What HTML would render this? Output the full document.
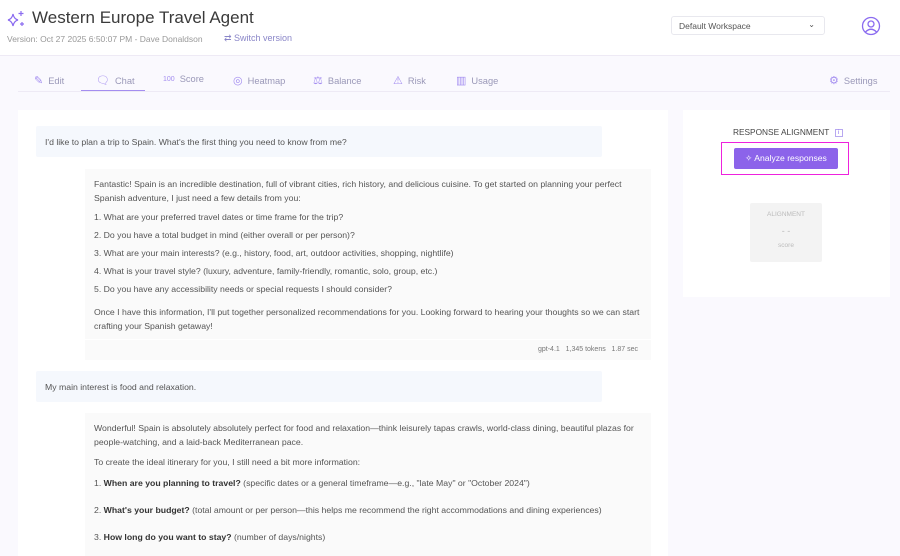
<!DOCTYPE html>
<html><head><meta charset="utf-8"><style>
*{margin:0;padding:0;box-sizing:border-box}
body{width:900px;height:556px;overflow:hidden;background:#faf9fe;font-family:"Liberation Sans",sans-serif;position:relative;color:#555}
.a{position:absolute;white-space:nowrap}
.hdr{position:absolute;left:0;top:0;width:900px;height:56px;background:#fff;border-bottom:1px solid #eeeaf5}
.tab{position:absolute;top:74px;font-size:9.3px;color:#9a98b8;display:flex;align-items:center;gap:5px}
.tab span{color:#a48ef0;font-size:11px}
.t{font-size:8.7px;color:#555;position:absolute;white-space:nowrap}
b{color:#333}
</style></head><body>
<div class="hdr"></div>
<svg class="a" style="left:5px;top:10px" width="22" height="18" viewBox="0 0 22 18" fill="none" stroke="#8b6cf0" stroke-width="1.2"><path d="M8 4 Q9 9 13 10 Q9 11 8 16 Q7 11 3 10 Q7 9 8 4Z"/><path d="M16 1v5M13.5 3.5h5M17 12v4M15 14h4"/></svg>
<div class="a" style="left:32px;top:8px;font-size:17px;color:#3a3a3a">Western Europe Travel Agent</div>
<div class="a" style="left:7px;top:34px;font-size:8.5px;color:#999">Version: Oct 27 2025 6:50:07 PM - Dave Donaldson</div>
<div class="a" style="left:224px;top:33px;font-size:9px;color:#8a86c8">⇄ Switch version</div>
<div class="a" style="left:671px;top:16px;width:154px;height:19px;border:1px solid #e8e8ee;border-radius:3px;background:#fff;font-size:8.5px;color:#555;padding:4px 7px">Default Workspace<span style="position:absolute;right:9px;top:3px;font-size:8px">⌄</span></div>
<svg class="a" style="left:861px;top:16px" width="20" height="20" viewBox="0 0 20 20" fill="none" stroke="#8b6cf0" stroke-width="1.3"><circle cx="10" cy="10" r="8.5"/><circle cx="10" cy="8" r="3"/><path d="M4.5 16 Q10 10.5 15.5 16"/></svg>

<div class="tab" style="left:34px"><span>✎</span>Edit</div>
<div class="tab" style="left:96px"><span>🗨</span>Chat</div>
<div class="a" style="left:81px;top:90px;width:64px;height:2px;background:#a48ef0"></div>
<div class="tab" style="left:163px"><span style="font-size:7px">100</span>Score</div>
<div class="tab" style="left:233px"><span>◎</span>Heatmap</div>
<div class="tab" style="left:313px"><span>⚖</span>Balance</div>
<div class="tab" style="left:393px"><span>⚠</span>Risk</div>
<div class="tab" style="left:456px"><span>▥</span>Usage</div>
<div class="tab" style="left:829px"><span>⚙</span>Settings</div>
<div class="a" style="left:18px;top:91px;width:872px;height:1px;background:#eeeaf5"></div>

<div class="a" style="left:18px;top:110px;width:650px;height:446px;background:#fff"></div>
<div class="a" style="left:36px;top:126px;width:566px;height:31px;background:#f5f8fd;border-radius:2px"></div>
<div class="t" style="left:45px;top:137px">I'd like to plan a trip to Spain. What's the first thing you need to know from me?</div>
<div class="a" style="left:85px;top:169px;width:566px;height:191px;background:#fafafa"></div>
<div class="t" style="left:94px;top:179px">Fantastic! Spain is an incredible destination, full of vibrant cities, rich history, and delicious cuisine. To get started on planning your perfect</div>
<div class="t" style="left:94px;top:193px">Spanish adventure, I just need a few details from you:</div>
<div class="t" style="left:94px;top:212px">1. What are your preferred travel dates or time frame for the trip?</div>
<div class="t" style="left:94px;top:230px">2. Do you have a total budget in mind (either overall or per person)?</div>
<div class="t" style="left:94px;top:248px">3. What are your main interests? (e.g., history, food, art, outdoor activities, shopping, nightlife)</div>
<div class="t" style="left:94px;top:266px">4. What is your travel style? (luxury, adventure, family-friendly, romantic, solo, group, etc.)</div>
<div class="t" style="left:94px;top:284px">5. Do you have any accessibility needs or special requests I should consider?</div>
<div class="t" style="left:94px;top:307px">Once I have this information, I'll put together personalized recommendations for you. Looking forward to hearing your thoughts so we can start</div>
<div class="t" style="left:94px;top:321px">crafting your Spanish getaway!</div>
<div class="a" style="left:85px;top:339px;width:566px;height:1px;background:#fff"></div>
<div class="t" style="left:538px;top:346px;font-size:7px;color:#777">gpt-4.1 &nbsp; 1,345 tokens &nbsp; 1.87 sec</div>

<div class="a" style="left:36px;top:371px;width:566px;height:31px;background:#f5f8fd;border-radius:2px"></div>
<div class="t" style="left:45px;top:382px">My main interest is food and relaxation.</div>
<div class="a" style="left:85px;top:413px;width:566px;height:143px;background:#fafafa"></div>
<div class="t" style="left:94px;top:423px">Wonderful! Spain is absolutely absolutely perfect for food and relaxation—think leisurely tapas crawls, world-class dining, beautiful plazas for</div>
<div class="t" style="left:94px;top:437px">people-watching, and a laid-back Mediterranean pace.</div>
<div class="t" style="left:94px;top:457px">To create the ideal itinerary for you, I still need a bit more information:</div>
<div class="t" style="left:94px;top:478px">1. <b>When are you planning to travel?</b> (specific dates or a general timeframe—e.g., "late May" or "October 2024")</div>
<div class="t" style="left:94px;top:505px">2. <b>What's your budget?</b> (total amount or per person—this helps me recommend the right accommodations and dining experiences)</div>
<div class="t" style="left:94px;top:532px">3. <b>How long do you want to stay?</b> (number of days/nights)</div>

<div class="a" style="left:683px;top:110px;width:207px;height:187px;background:#fff"></div>
<div class="a" style="left:733px;top:127px;font-size:8.3px;color:#444">RESPONSE ALIGNMENT <span style="display:inline-block;width:8px;height:8px;border:1px solid #b8a8f0;font-size:6px;color:#8b6cf0;text-align:center;line-height:6px;vertical-align:middle;margin-left:3px">i</span></div>
<div class="a" style="left:721px;top:142px;width:128px;height:33px;border:1.5px solid #ee22dd"></div>
<div class="a" style="left:734px;top:148px;width:104px;height:21px;background:#8c63ea;border-radius:2px;color:#fff;font-size:8.6px;text-align:center;line-height:21px">✧ Analyze responses</div>
<div class="a" style="left:750px;top:203px;width:72px;height:59px;background:#f3f3f3;border-radius:2px;text-align:center;color:#bbb;font-size:6.5px">
<div style="margin-top:8px">ALIGNMENT</div><div style="margin-top:8px;font-size:9px">- -</div><div style="margin-top:6px">score</div></div>
</body></html>
